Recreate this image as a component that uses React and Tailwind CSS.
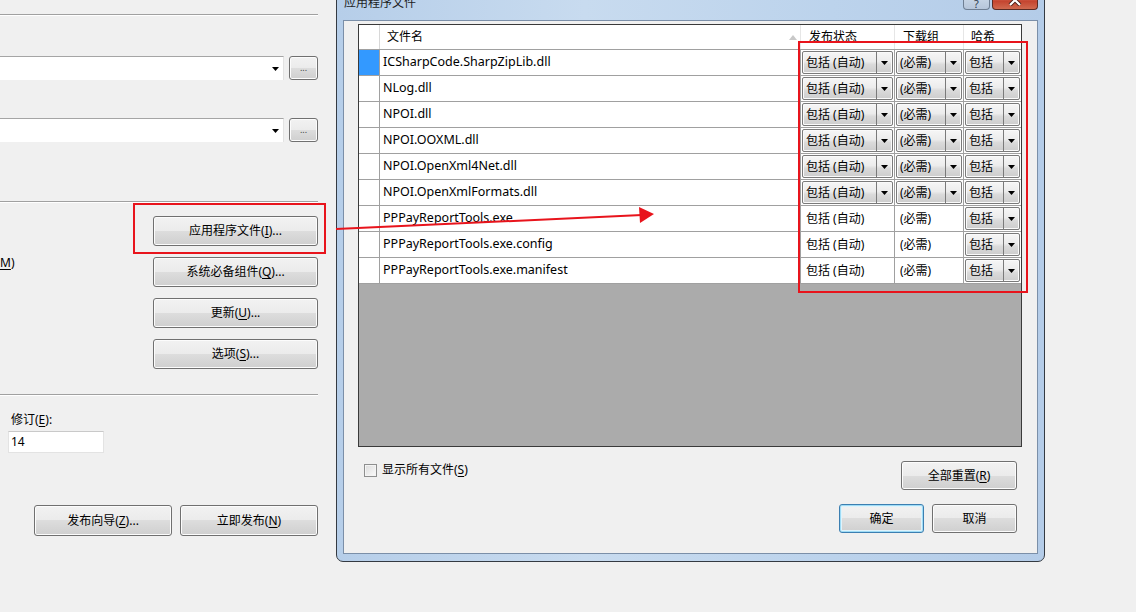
import React from 'react';

const files = [
  { name: 'ICSharpCode.SharpZipLib.dll', combo: true, selected: true },
  { name: 'NLog.dll', combo: true },
  { name: 'NPOI.dll', combo: true },
  { name: 'NPOI.OOXML.dll', combo: true },
  { name: 'NPOI.OpenXml4Net.dll', combo: true },
  { name: 'NPOI.OpenXmlFormats.dll', combo: true },
  { name: 'PPPayReportTools.exe', combo: false },
  { name: 'PPPayReportTools.exe.config', combo: false },
  { name: 'PPPayReportTools.exe.manifest', combo: false },
];

const btnCls =
  'flex items-center justify-center border border-[#707070] rounded-[3px] bg-[linear-gradient(#f2f2f2_0%,#ebebeb_50%,#dddddd_50%,#cfcfcf_100%)] shadow-[inset_0_0_0_1px_#fcfcfc]';

const Arrow = () => (
  <svg width="7" height="4" viewBox="0 0 7 4">
    <path d="M0 0H7L3.5 4Z" fill="#000" />
  </svg>
);

const U = ({ children }) => <span className="underline underline-offset-[2px]">{children}</span>;

const WinButton = ({ className = '', children }) => (
  <div className={`${btnCls} ${className}`}>{children}</div>
);

const Separator = () => (
  <div className="h-[2px] border-t border-[#a0a0a0] border-b border-b-white" />
);

const PathCombo = () => (
  <div className="flex items-start">
    <div className="w-[284px] h-[24px] bg-white border-t border-[#a5a5a5] border-r border-r-[#e3e3e3] flex items-center justify-end pr-[4px]">
      <Arrow />
    </div>
    <WinButton className="ml-[5px] w-[29px] h-[24px] text-[9px] leading-none pb-[2px] text-[#444]">...</WinButton>
  </div>
);

const LeftPanel = () => (
  <div className="w-[336px] shrink-0 pr-[18px] flex flex-col">
    <div className="h-[14px]" />
    <Separator />
    <div className="mt-[40px]">
      <PathCombo />
    </div>
    <div className="mt-[38px]">
      <PathCombo />
    </div>
    <div className="mt-[59px]">
      <Separator />
    </div>
    <div className="mt-[13px] flex flex-col gap-[11px]">
      <div className="flex justify-end">
        <WinButton className="w-[165px] h-[30px]">
          应用程序文件(<U>I</U>)...
        </WinButton>
      </div>
      <div className="flex justify-between items-start">
        <span className="-mt-[1px] leading-[14px]">
          <U>M</U>)
        </span>
        <WinButton className="w-[165px] h-[30px]">
          系统必备组件(<U>Q</U>)...
        </WinButton>
      </div>
      <div className="flex justify-end">
        <WinButton className="w-[165px] h-[30px]">
          更新(<U>U</U>)...
        </WinButton>
      </div>
      <div className="flex justify-end">
        <WinButton className="w-[165px] h-[30px]">
          选项(<U>S</U>)...
        </WinButton>
      </div>
    </div>
    <div className="mt-[25px]">
      <Separator />
    </div>
    <div className="mt-[17px] ml-[11px] leading-[14px]">
      修订(<U>E</U>):
    </div>
    <div className="mt-[4px] ml-[8px] w-[96px] h-[22px] bg-white border border-[#e3e3e3] border-t-[#c9c9c9] pl-[2px] leading-[20px]">
      14
    </div>
    <div className="mt-[52px] flex justify-end gap-[8px]">
      <WinButton className="w-[138px] h-[31px]">
        发布向导(<U>Z</U>)...
      </WinButton>
      <WinButton className="w-[138px] h-[31px]">
        立即发布(<U>N</U>)
      </WinButton>
    </div>
  </div>
);

const CellCombo = ({ text }) => (
  <div className="h-full p-px">
    <div className="h-full flex border border-[#7a7a7a] rounded-[2px] bg-[linear-gradient(#f6f6f6_0%,#ececec_45%,#dadada_60%,#cdcdcd_100%)] shadow-[inset_0_0_0_1px_#fafafa]">
      <span className="flex-1 pl-[3px] leading-[22px] whitespace-nowrap overflow-hidden">{text}</span>
      <span className="w-[16px] border-l border-[#7a7a7a] flex items-center justify-center">
        <Arrow />
      </span>
    </div>
  </div>
);

const CellText = ({ text }) => (
  <div className="h-full pl-[5px] flex items-center whitespace-nowrap">{text}</div>
);

const Grid = () => (
  <div className="ml-[14px] mt-[3px] w-[664px] h-[423px] border border-[#3a3a3a] bg-[#ababab] flex flex-col">
    <div className="h-[25px] shrink-0 bg-white border-b border-[#a0a0a0] flex">
      <div className="w-[21px] border-r border-[#d8d8d8]" />
      <div className="w-[421px] border-r border-[#e6e6e6] flex items-center justify-between pl-[7px] pr-[3px]">
        <span>文件名</span>
        <svg width="8" height="5" viewBox="0 0 8 5">
          <path d="M0 5H8L4 0Z" fill="#c8c8c8" />
        </svg>
      </div>
      <div className="w-[94px] border-r border-[#e6e6e6] flex items-center pl-[8px]">发布状态</div>
      <div className="w-[69px] border-r border-[#e6e6e6] flex items-center pl-[8px]">下载组</div>
      <div className="flex-1 flex items-center pl-[7px]">哈希</div>
    </div>
    {files.map((f) => (
      <div key={f.name} className="h-[26px] shrink-0 bg-white border-b border-[#a0a0a0] flex">
        <div className={`w-[21px] border-r border-[#a0a0a0] ${f.selected ? 'bg-[#3399ff]' : 'bg-white'}`} />
        <div className="w-[421px] border-r border-[#a0a0a0] pl-[3px] flex items-center whitespace-nowrap text-[12.5px]">
          {f.name}
        </div>
        <div className="w-[94px] border-r border-[#a0a0a0]">
          {f.combo ? <CellCombo text="包括 (自动)" /> : <CellText text="包括 (自动)" />}
        </div>
        <div className="w-[69px] border-r border-[#a0a0a0]">
          {f.combo ? <CellCombo text="(必需)" /> : <CellText text="(必需)" />}
        </div>
        <div className="flex-1">
          <CellCombo text="包括" />
        </div>
      </div>
    ))}
  </div>
);

const Dialog = () => (
  <div className="w-[709px] h-[572px] -mt-[10px] shrink-0 border border-[#343a42] rounded-b-[7px] bg-[linear-gradient(90deg,#b6cee9_0%,#c8dbef_35%,#bcd3ec_70%,#b4cce8_100%)] flex flex-col px-[6px] pb-[7px]">
    <div className="h-[29px] shrink-0 flex items-start justify-between pl-[1px]">
      <span className="pt-[5px] leading-[14px] text-[#1e1e1e]">应用程序文件</span>
      <div className="flex gap-[2px]">
        <div className="w-[27px] h-[19px] rounded-b-[4px] border border-[#6f7f93] border-t-0 bg-[linear-gradient(#dfe8f3,#c5d3e4_50%,#b6c6da)] flex items-center justify-center text-[11px] leading-none text-[#2c3a4c] pt-[6px]">
          ?
        </div>
        <div className="w-[46px] h-[19px] rounded-b-[4px] border border-[#5a2b24] border-t-0 bg-[linear-gradient(#e8a697,#d7705d_45%,#c4432e_55%,#d06a50)] flex items-start justify-center">
          <svg width="14" height="12" viewBox="0 0 14 12" className="mt-[3px]">
            <path d="M2 1L12 11M12 1L2 11" stroke="#4a1e18" strokeWidth="4" />
            <path d="M2 1L12 11M12 1L2 11" stroke="#ffffff" strokeWidth="2.2" />
          </svg>
        </div>
      </div>
    </div>
    <div className="flex-1 border border-[#7b8fa8] bg-[#f0f0f0] flex flex-col">
      <Grid />
      <div className="mt-[14px] flex items-start justify-between pr-[20px]">
        <div className="flex items-center pl-[20px] mt-[2px]">
          <div className="w-[13px] h-[13px] border border-[#8e8f8f] bg-[linear-gradient(135deg,#dcdcdc,#fbfbfb)] shadow-[inset_0_0_0_1px_#f4f4f4]" />
          <span className="ml-[5px] leading-[14px]">
            显示所有文件(<U>S</U>)
          </span>
        </div>
        <WinButton className="w-[116px] h-[29px]">
          全部重置(<U>R</U>)
        </WinButton>
      </div>
      <div className="mt-[14px] flex justify-end gap-[8px] pr-[20px]">
        <div className="w-[85px] h-[29px] flex items-center justify-center rounded-[3px] border border-[#3c7fb1] bg-[linear-gradient(#f2f2f2_0%,#ebebeb_50%,#dddddd_50%,#cfcfcf_100%)] shadow-[inset_0_0_0_1px_#9fdcf6,inset_0_0_0_2px_#dff3fb]">
          确定
        </div>
        <WinButton className="w-[85px] h-[29px]">取消</WinButton>
      </div>
    </div>
  </div>
);

export default function App() {
  return (
    <div className="relative w-[1136px] h-[612px] overflow-hidden bg-[#f0f0f0] flex items-start text-[12px] text-black font-['Noto_Sans','Noto_Sans_CJK_SC',sans-serif]">
      <LeftPanel />
      <Dialog />
      <svg className="absolute inset-0 pointer-events-none" width="1136" height="612" viewBox="0 0 1136 612">
        <rect x="134" y="204" width="191" height="49" fill="none" stroke="#e8141c" strokeWidth="2" />
        <rect x="799" y="42" width="228" height="250" fill="none" stroke="#e8141c" strokeWidth="2" />
        <path d="M336 229L642 215" stroke="#e8141c" strokeWidth="2" />
        <path d="M639 207L654 214L640 223Z" fill="#e8141c" />
      </svg>
    </div>
  );
}
